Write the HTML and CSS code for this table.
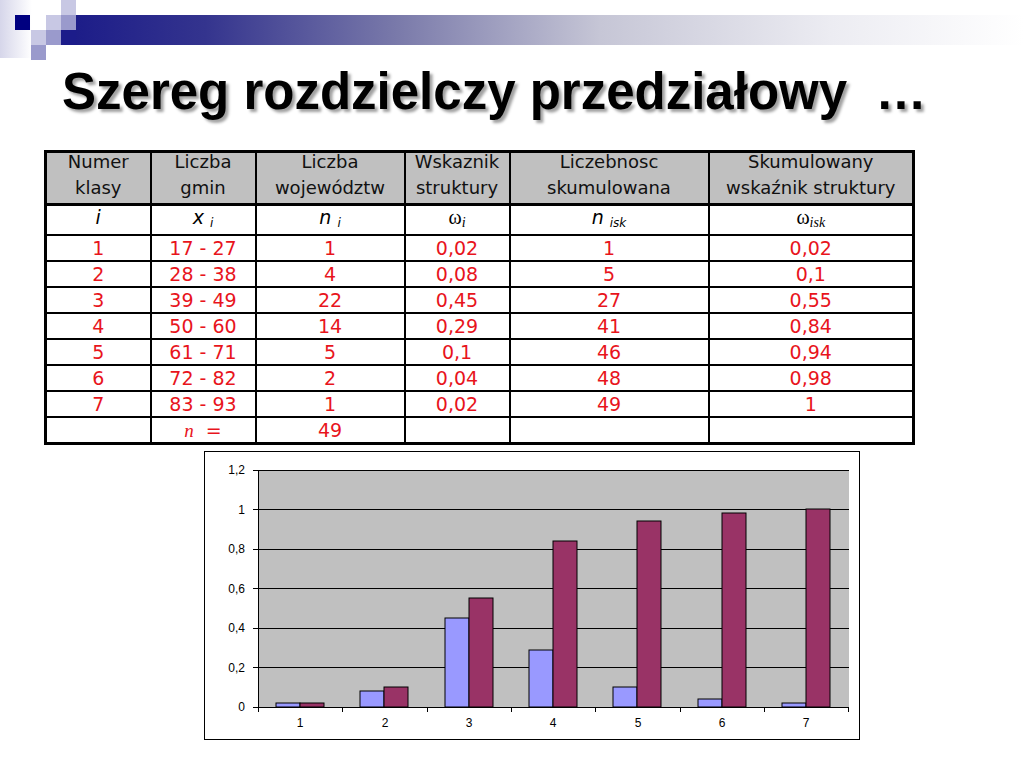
FILE: index.html
```html
<!DOCTYPE html>
<html lang="pl">
<head>
<meta charset="utf-8">
<title>Szereg rozdzielczy przedziałowy</title>
<link rel="stylesheet" href="styles.css">
</head>
<body>
<header class="deco">
  <svg width="1024" height="60" viewBox="0 0 1024 60">
    <defs>
      <linearGradient id="strip" x1="0" y1="0" x2="1" y2="0">
        <stop offset="0" stop-color="#d6d6ea"/>
        <stop offset="1" stop-color="#ffffff"/>
      </linearGradient>
      <linearGradient id="bar" gradientUnits="userSpaceOnUse" x1="61" y1="0" x2="1024" y2="0">
        <stop offset="0" stop-color="#1a1a88"/>
        <stop offset="0.15" stop-color="#34348e"/>
        <stop offset="0.35" stop-color="#7a7aaa"/>
        <stop offset="0.56" stop-color="#c6c6d6"/>
        <stop offset="0.8" stop-color="#ececf2"/>
        <stop offset="1" stop-color="#ffffff"/>
      </linearGradient>
    </defs>
    <rect x="0" y="0" width="32" height="58" fill="url(#strip)"/>
    <rect x="76" y="15" width="948" height="30" fill="url(#bar)"/>
    <rect x="61" y="30" width="15" height="15" fill="#1c1c8a"/>
    <rect x="15" y="15" width="15" height="15" fill="#000080"/>
    <rect x="46" y="15" width="15" height="15" fill="#c8c8e4"/>
    <rect x="61" y="0" width="15" height="15" fill="#c8c8e4"/>
    <rect x="31" y="30" width="15" height="15" fill="#c8c8e4"/>
    <rect x="61" y="15" width="15" height="15" fill="#9a9acc"/>
    <rect x="46" y="30" width="15" height="15" fill="#9a9acc"/>
    <rect x="31" y="45" width="15" height="15" fill="#9a9acc"/>
  </svg>
</header>

<h1 class="title">Szereg rozdzielczy przedziałowy &nbsp;…</h1>

<table class="grid">
  <colgroup>
    <col class="c1"><col class="c2"><col class="c3"><col class="c4"><col class="c5"><col class="c6">
  </colgroup>
  <thead>
    <tr class="head">
      <th><div class="hd"><div class="hd-in">Numer<br>klasy</div></div></th>
      <th><div class="hd"><div class="hd-in">Liczba<br>gmin</div></div></th>
      <th><div class="hd"><div class="hd-in">Liczba<br>województw</div></div></th>
      <th><div class="hd"><div class="hd-in">Wskaznik<br>struktury</div></div></th>
      <th><div class="hd"><div class="hd-in">Liczebnosc<br>skumulowana</div></div></th>
      <th><div class="hd"><div class="hd-in">Skumulowany<br>wskaźnik struktury</div></div></th>
    </tr>
    <tr class="sym">
      <td><i>i</i></td>
      <td><i>x</i> <sub><i>i</i></sub></td>
      <td><i>n</i> <sub><i>i</i></sub></td>
      <td><span class="om">ω<sub><i>i</i></sub></span></td>
      <td><i>n</i> <sub><i>isk</i></sub></td>
      <td><span class="om">ω<sub><i>isk</i></sub></span></td>
    </tr>
  </thead>
  <tbody>
    <tr><td>1</td><td>17 - 27</td><td>1</td><td>0,02</td><td>1</td><td>0,02</td></tr>
    <tr><td>2</td><td>28 - 38</td><td>4</td><td>0,08</td><td>5</td><td>0,1</td></tr>
    <tr><td>3</td><td>39 - 49</td><td>22</td><td>0,45</td><td>27</td><td>0,55</td></tr>
    <tr><td>4</td><td>50 - 60</td><td>14</td><td>0,29</td><td>41</td><td>0,84</td></tr>
    <tr><td>5</td><td>61 - 71</td><td>5</td><td>0,1</td><td>46</td><td>0,94</td></tr>
    <tr><td>6</td><td>72 - 82</td><td>2</td><td>0,04</td><td>48</td><td>0,98</td></tr>
    <tr><td>7</td><td>83 - 93</td><td>1</td><td>0,02</td><td>49</td><td>1</td></tr>
    <tr><td></td><td><span class="nvar">n</span> &nbsp;=</td><td>49</td><td></td><td></td><td></td></tr>
  </tbody>
</table>

<figure class="chart">
  <svg width="654" height="287" viewBox="0 0 654 287">
    <rect x="53" y="18" width="591" height="237" fill="#c0c0c0"/>
    <g stroke="#000" stroke-width="1" shape-rendering="crispEdges">
      <line x1="53" y1="18.5" x2="644" y2="18.5"/>
      <line x1="53" y1="57.5" x2="644" y2="57.5"/>
      <line x1="53" y1="97.5" x2="644" y2="97.5"/>
      <line x1="53" y1="136.5" x2="644" y2="136.5"/>
      <line x1="53" y1="176.5" x2="644" y2="176.5"/>
      <line x1="53" y1="215.5" x2="644" y2="215.5"/>
      <line x1="53.5" y1="18" x2="53.5" y2="255"/>
      <line x1="48" y1="18.5" x2="53" y2="18.5"/>
      <line x1="48" y1="57.5" x2="53" y2="57.5"/>
      <line x1="48" y1="97.5" x2="53" y2="97.5"/>
      <line x1="48" y1="136.5" x2="53" y2="136.5"/>
      <line x1="48" y1="176.5" x2="53" y2="176.5"/>
      <line x1="48" y1="215.5" x2="53" y2="215.5"/>
      <line x1="48" y1="255.5" x2="53" y2="255.5"/>
    </g>
    <g class="ylab" text-anchor="end">
      <text x="40" y="22">1,2</text>
      <text x="40" y="62">1</text>
      <text x="40" y="101">0,8</text>
      <text x="40" y="141">0,6</text>
      <text x="40" y="180">0,4</text>
      <text x="40" y="220">0,2</text>
      <text x="40" y="259">0</text>
    </g>
    <g stroke="#000" stroke-width="1">
      <rect x="71" y="251" width="24" height="4" fill="#9999ff"/>
      <rect x="95" y="251" width="24" height="4" fill="#993366"/>
      <rect x="155" y="239" width="24" height="16" fill="#9999ff"/>
      <rect x="179" y="235" width="24" height="20" fill="#993366"/>
      <rect x="240" y="166" width="24" height="89" fill="#9999ff"/>
      <rect x="264" y="146" width="24" height="109" fill="#993366"/>
      <rect x="324" y="198" width="24" height="57" fill="#9999ff"/>
      <rect x="348" y="89" width="24" height="166" fill="#993366"/>
      <rect x="408" y="235" width="24" height="20" fill="#9999ff"/>
      <rect x="432" y="69" width="24" height="186" fill="#993366"/>
      <rect x="493" y="247" width="24" height="8" fill="#9999ff"/>
      <rect x="517" y="61" width="24" height="194" fill="#993366"/>
      <rect x="577" y="251" width="24" height="4" fill="#9999ff"/>
      <rect x="601" y="57" width="24" height="198" fill="#993366"/>
    </g>
    <g stroke="#000" stroke-width="1" shape-rendering="crispEdges">
      <line x1="53" y1="255.5" x2="644" y2="255.5"/>
      <line x1="53.5" y1="255" x2="53.5" y2="260"/>
      <line x1="137.5" y1="255" x2="137.5" y2="260"/>
      <line x1="222.5" y1="255" x2="222.5" y2="260"/>
      <line x1="306.5" y1="255" x2="306.5" y2="260"/>
      <line x1="390.5" y1="255" x2="390.5" y2="260"/>
      <line x1="475.5" y1="255" x2="475.5" y2="260"/>
      <line x1="559.5" y1="255" x2="559.5" y2="260"/>
      <line x1="643.5" y1="255" x2="643.5" y2="260"/>
    </g>
    <g class="xlab" text-anchor="middle">
      <text x="95" y="275">1</text>
      <text x="180" y="275">2</text>
      <text x="264" y="275">3</text>
      <text x="348" y="275">4</text>
      <text x="433" y="275">5</text>
      <text x="517" y="275">6</text>
      <text x="601" y="275">7</text>
    </g>
  </svg>
</figure>
</body>
</html>
```

FILE: styles.css
```css
html, body {
  margin: 0;
  padding: 0;
  background: #ffffff;
}

body {
  width: 1024px;
  height: 768px;
  overflow: hidden;
  font-family: "DejaVu Sans", "Liberation Sans", sans-serif;
}

.deco svg {
  display: block;
}

.title {
  margin: 4px 0 0 0;
  padding-left: 62px;
  font-family: "Liberation Sans", Arial, sans-serif;
  font-weight: bold;
  font-size: 51px;
  line-height: 56px;
  color: #000;
  white-space: nowrap;
  text-shadow: 3px 3px 3px #a0a0a0;
}

.grid {
  margin: 30px 0 0 44px;
  border-collapse: collapse;
  table-layout: fixed;
  width: 868px;
  border: 3px solid #000;
}

.c1 { width: 105px; }
.c2 { width: 105px; }
.c3 { width: 149px; }
.c4 { width: 105px; }
.c5 { width: 199px; }
.c6 { width: 205px; }

.grid th,
.grid td {
  border: 2px solid #000;
  padding: 0;
  text-align: center;
  vertical-align: middle;
}

.head th {
  background: #c0c0c0;
  font-weight: normal;
  font-size: 18px;
  color: #111;
  height: 50px;
  border-bottom-width: 3px;
}

.hd {
  height: 50px;
  overflow: hidden;
}

.hd-in {
  margin-top: -4px;
  line-height: 26px;
}

.sym td {
  height: 28px;
  font-size: 19px;
  line-height: 22px;
  color: #000;
  vertical-align: top;
}

.sym sub {
  font-size: 12px;
  vertical-align: -3px;
  line-height: 0;
}

.om {
  font-family: "Liberation Serif", "DejaVu Serif", serif;
  font-size: 20px;
}

.om sub {
  font-size: 14px;
  vertical-align: -3px;
}

tbody td {
  height: 24px;
  font-size: 19px;
  line-height: 22px;
  color: #e8141c;
}

.nvar {
  font-family: "Liberation Serif", serif;
  font-style: italic;
}

.chart {
  margin: 6px 0 0 204px;
  width: 654px;
  height: 287px;
  border: 1px solid #000;
  background: #fff;
}

.chart svg {
  display: block;
}

.ylab text,
.xlab text {
  font-family: "Liberation Sans", Arial, sans-serif;
  font-size: 12px;
  fill: #000;
}
```
